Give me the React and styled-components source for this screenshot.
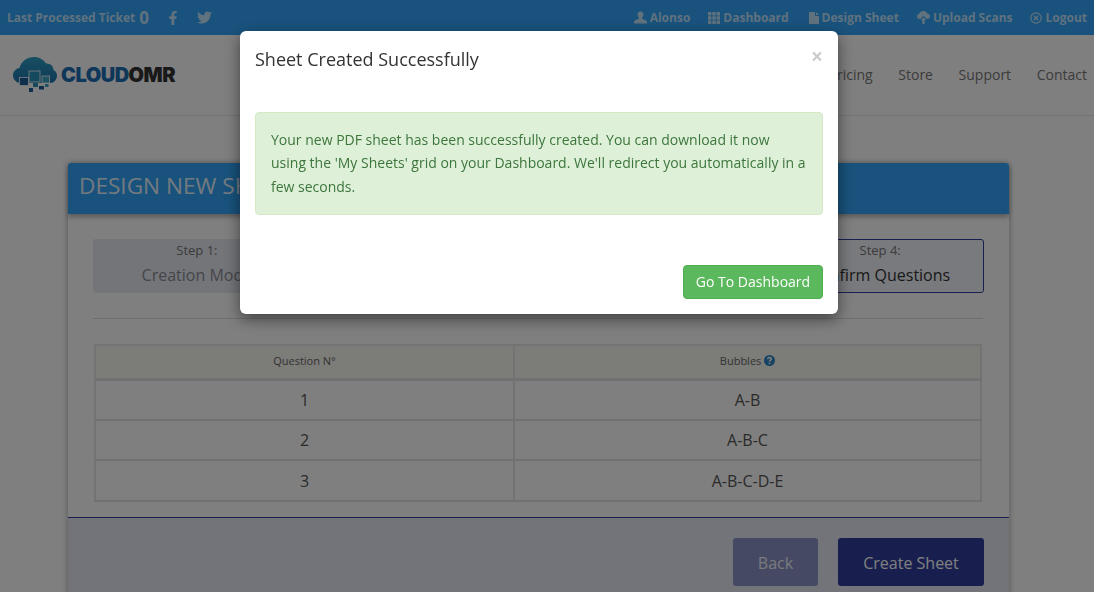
import React from 'react';
import styled, { createGlobalStyle } from 'styled-components';
import { FaFacebookF, FaTwitter } from 'react-icons/fa';

const GlobalStyle = createGlobalStyle`
    html, body {
        margin: 0;
        padding: 0;
        height: 592px;
        overflow: hidden;
        background: #ffffff;
        font-family: "Open Sans", "Liberation Sans", sans-serif;
        font-size: 14px;
        color: #333333;
    }
    * { box-sizing: border-box; }
`;

const UserIcon = () => (
    <svg width="13" height="13" viewBox="0 0 14 13"><path fill="currentColor" d="M7 0c2 0 3.2 1.4 3.2 3.3 0 1.4-.6 2.7-1.500 3.400-.3.3-.2.9.2 1.100l3.600 1.600c.9.4 1.500.9 1.500 1.900V13H0v-1.700c0-1 .6-1.500 1.500-1.900l3.600-1.600c.4-.2.5-.8.2-1.100-.9-.7-1.500-2-1.500-3.400C3.800 1.400 5 0 7 0z"/></svg>
);

const GridIcon = () => (
    <svg width="12" height="12" viewBox="0 0 12 12"><path fill="currentColor" d="M0 0h3.400v3.400H0zM4.300 0h3.400v3.400H4.300zM8.600 0H12v3.400H8.600zM0 4.300h3.400v3.400H0zM4.300 4.300h3.400v3.400H4.300zM8.600 4.300H12v3.400H8.600zM0 8.600h3.400V12H0zM4.300 8.600h3.400V12H4.300zM8.600 8.600H12V12H8.600z"/></svg>
);

const FileIcon = () => (
    <svg width="10" height="12" viewBox="0 0 10 12"><path fill="currentColor" d="M0 0h6v3.600c0 .3.2.5.5.5H10V12H0zM7 0l3 3.100H7z"/></svg>
);

const UploadIcon = () => (
    <svg width="13" height="13" viewBox="0 0 13 13"><path fill="currentColor" d="M6.500 0c1.800 0 3.200 1 3.700 2.600C11.800 2.900 13 4 13 5.500 13 7 11.800 8 10.300 8H9.500L6.500 4.700 3.500 8H2.600C1.100 8 0 6.900 0 5.500 0 4.300.8 3.300 2 3 2.500 1.200 4.300 0 6.500 0zM6.500 6.300 9.200 9.300H7.600V13H5.400V9.300H3.800z"/></svg>
);

const LogoutIcon = () => (
    <svg width="12" height="12" viewBox="0 0 12 12" fill="none" stroke="currentColor"><circle cx="6" cy="6" r="5.200" strokeWidth="1.200"/><path strokeWidth="1.500" d="M4 4l4 4M8 4l-4 4"/></svg>
);

const HelpIcon = () => (
    <svg width="11" height="11" viewBox="0 0 11 11"><circle cx="5.500" cy="5.500" r="5.500" fill="#2f86c5"/><path fill="none" stroke="#fff" strokeWidth="1.500" d="M3.700 4.200c0-1 .8-1.600 1.800-1.600s1.800.6 1.800 1.500c0 1.300-1.800 1.300-1.800 2.500"/><path fill="#fff" d="M4.700 7.600h1.600v1.400H4.700z"/></svg>
);

const CloudLogo = () => (
    <svg width="46" height="38" viewBox="0 0 46 38">
        <defs>
            <linearGradient id="cloudFill" x1="0" y1="0" x2="0" y2="1">
                <stop offset="0" stopColor="#2f9fc4"/>
                <stop offset="1" stopColor="#1f74ad"/>
            </linearGradient>
        </defs>
        <path fill="url(#cloudFill)" d="M9 27C4.500 27 1 23.500 1 19.500 1 15.500 4 12.500 7.500 12 9 5.500 15 1 22 1c5 0 9.500 2.500 12 6.500 4-.5 7.500 2.500 7.500 6.500 2.500 1 3.500 3.500 3.500 5.500 0 4-3 7.500-7 7.500z"/>
        <rect x="7.500" y="21.500" width="9" height="8" fill="#1d5f99" stroke="#ffffff" strokeWidth="0.800"/>
        <rect x="17" y="15" width="11" height="11" fill="#2a93bc" stroke="#ffffff" strokeWidth="0.800"/>
        <rect x="30" y="20" width="7.500" height="7" fill="#3aa5c6" stroke="#ffffff" strokeWidth="0.800"/>
        <rect x="21" y="27" width="5" height="4" fill="#2a93bc"/>
        <rect x="27" y="30" width="5" height="3.500" fill="#1d5f99"/>
        <rect x="33" y="28" width="3.500" height="3" fill="#3aa5c6"/>
        <rect x="17" y="32" width="4" height="4" fill="#1d5f99"/>
    </svg>
);

const App = () => {
    return (
        <>
            <GlobalStyle/>
            <TopBar>
                <TicketGroup>
                    <TicketLabel>Last Processed Ticket</TicketLabel>
                    <TicketCount>0</TicketCount>
                    <SocialLink><FaFacebookF size={14}/></SocialLink>
                    <SocialLink><FaTwitter size={15}/></SocialLink>
                </TicketGroup>
                <TopLinks>
                    <TopLink><UserIcon/>Alonso</TopLink>
                    <TopLink $spaced><GridIcon/>Dashboard</TopLink>
                    <TopLink><FileIcon/>Design Sheet</TopLink>
                    <TopLink><UploadIcon/>Upload Scans</TopLink>
                    <TopLink><LogoutIcon/>Logout</TopLink>
                </TopLinks>
            </TopBar>

            <Header>
                <Logo>
                    <CloudLogo/>
                    <LogoText>CLOUD<LogoDark>OMR</LogoDark></LogoText>
                </Logo>
                <Nav>
                    <NavLink>Pricing</NavLink>
                    <NavLink>Store</NavLink>
                    <NavLink>Support</NavLink>
                    <NavLink>Contact</NavLink>
                </Nav>
            </Header>

            <Card>
                <CardTitle>DESIGN NEW SHEET</CardTitle>
                <CardBody>
                    <Steps>
                        <StepBox>
                            <StepNumber>Step 1:</StepNumber>
                            <StepName>Creation Mode</StepName>
                        </StepBox>
                        <StepBox><StepNumber>Step 2:</StepNumber></StepBox>
                        <StepBox><StepNumber>Step 3:</StepNumber></StepBox>
                        <StepBox $current>
                            <StepNumber>Step 4:</StepNumber>
                            <StepName $current>Confirm Questions</StepName>
                        </StepBox>
                    </Steps>
                    <Rule/>
                    <QuestionTable>
                        <thead>
                            <tr>
                                <HeadCell $first>Question N°</HeadCell>
                                <HeadCell>Bubbles <HelpIcon/></HeadCell>
                            </tr>
                        </thead>
                        <tbody>
                            <tr><Cell>1</Cell><Cell>A-B</Cell></tr>
                            <tr><Cell>2</Cell><Cell>A-B-C</Cell></tr>
                            <tr><Cell>3</Cell><Cell>A-B-C-D-E</Cell></tr>
                        </tbody>
                    </QuestionTable>
                </CardBody>
                <CardFooter>
                    <FooterButton disabled $muted>Back</FooterButton>
                    <FooterButton>Create Sheet</FooterButton>
                </CardFooter>
            </Card>

            <Backdrop/>
            <Modal>
                <ModalHeader>
                    <ModalTitle>Sheet Created Successfully</ModalTitle>
                    <CloseButton>×</CloseButton>
                </ModalHeader>
                <SuccessAlert>
                    Your new PDF sheet has been successfully created. You can download it now using the 'My Sheets' grid on your Dashboard. We'll redirect you automatically in a few seconds.
                </SuccessAlert>
                <ModalFooter>
                    <GreenButton>Go To Dashboard</GreenButton>
                </ModalFooter>
            </Modal>
        </>
    )
}

export default App

const TopBar = styled.div`
    display: flex;
    align-items: center;
    justify-content: space-between;
    height: 35px;
    padding: 0 7px;
    background: #32a6fb;
`;

const TicketGroup = styled.div`
    display: flex;
    align-items: center;
    color: rgba(255, 255, 255, 0.7);
`;

const TicketLabel = styled.span`
    font-size: 12px;
    font-weight: 700;
`;

const TicketCount = styled.span`
    margin-left: 4px;
    font-size: 17px;
    font-weight: 700;
    line-height: 16px;
`;

const SocialLink = styled.span`
    display: flex;
    margin-left: 17px;
`;

const TopLinks = styled.div`
    display: flex;
    align-items: center;
    gap: 18px;
`;

const TopLink = styled.span`
    display: flex;
    align-items: center;
    gap: 3px;
    margin-right: ${(props) => (props.$spaced ? '2px' : '0')};
    font-size: 12px;
    font-weight: 700;
    color: rgba(255, 255, 255, 0.7);
`;

const Header = styled.div`
    display: flex;
    align-items: center;
    justify-content: space-between;
    height: 81px;
    padding: 0 7px 1px 12px;
    border-bottom: 1px solid #e7e7e7;
`;

const Logo = styled.div`
    display: flex;
    align-items: center;
    gap: 3px;
`;

const LogoText = styled.span`
    font-family: Inter, "Liberation Sans", sans-serif;
    font-size: 20px;
    font-weight: 900;
    letter-spacing: -0.500px;
    color: #1f6fb5;
`;

const LogoDark = styled.span`
    color: #333333;
`;

const Nav = styled.nav`
    display: flex;
    gap: 25.600px;
`;

const NavLink = styled.span`
    font-size: 14px;
    color: #777777;
`;

const Card = styled.div`
    width: 941px;
    margin: 47px 0 0 68px;
    border-radius: 3px 3px 0 0;
    box-shadow: 0 0 6px rgba(0, 0, 0, 0.35);
`;

const CardTitle = styled.div`
    height: 51px;
    padding-left: 11px;
    font-size: 22.600px;
    line-height: 46px;
    color: rgba(255, 255, 255, 0.9);
    background: #32a6fb;
    border-radius: 3px 3px 0 0;
    box-shadow: 0 3px 5px rgba(0, 0, 0, 0.3);
`;

const CardBody = styled.div`
    padding: 25px 25px 15px;
`;

const Steps = styled.div`
    display: grid;
    grid-template-columns: repeat(4, 1fr);
    gap: 20px;
`;

const StepBox = styled.div`
    height: 54px;
    text-align: center;
    border-radius: 3px;
    border: 1px solid ${(props) => (props.$current ? '#303f9f' : 'transparent')};
    background: ${(props) => (props.$current ? '#f3f5fb' : '#e8eaf2')};
`;

const StepNumber = styled.div`
    margin-top: 1px;
    font-size: 13px;
    line-height: 18px;
    color: #777777;
`;

const StepName = styled.div`
    margin-top: 4px;
    font-size: 16px;
    line-height: 24px;
    color: ${(props) => (props.$current ? '#333333' : '#8a8c94')};
`;

const Rule = styled.hr`
    height: 1px;
    margin: 25px 1px 25px 0;
    border: 0;
    background: #dddddd;
`;

const QuestionTable = styled.table`
    width: calc(100% - 3px);
    margin-left: 1px;
    table-layout: fixed;
    border-collapse: collapse;
    text-align: center;
    border: 2px solid #e6e6e6;
`;

const HeadCell = styled.th`
    width: ${(props) => (props.$first ? '419px' : 'auto')};
    height: 34px;
    padding: 0 0 2px;
    font-size: 11px;
    font-weight: 400;
    color: #666666;
    background: #f9f9f3;
    border-bottom: 3px solid #e2e2e2;
    border-left: 2px solid #e6e6e6;

    svg {
        vertical-align: -1px;
    }
`;

const Cell = styled.td`
    height: 40.500px;
    padding: 1px 0 0;
    font-size: 16px;
    color: #555555;
    border-bottom: 2px solid #e2e2e2;
    border-left: 2px solid #e6e6e6;
`;

const CardFooter = styled.div`
    display: flex;
    justify-content: flex-end;
    gap: 20px;
    height: 90px;
    padding: 20px 25px;
    border-top: 1px solid #303f9f;
    background: #e6e9f4;
`;

const FooterButton = styled.button`
    width: ${(props) => (props.$muted ? '85px' : '146px')};
    height: 48px;
    padding: 2px 0 0;
    font-family: inherit;
    font-size: 16px;
    color: #ffffff;
    background: #303f9f;
    border: 0;
    border-radius: 3px;
    opacity: ${(props) => (props.$muted ? 0.5 : 1)};
`;

const Backdrop = styled.div`
    position: fixed;
    inset: 0;
    background: rgba(0, 0, 0, 0.5);
`;

const Modal = styled.div`
    position: fixed;
    top: 31px;
    left: 240px;
    width: 598px;
    height: 283px;
    padding: 0 15px;
    background: #ffffff;
    border-radius: 6px;
    box-shadow: 0 5px 15px rgba(0, 0, 0, 0.5);
`;

const ModalHeader = styled.div`
    display: flex;
    align-items: flex-start;
    justify-content: space-between;
    height: 81px;
    padding-top: 15px;
`;

const ModalTitle = styled.h4`
    margin: 0;
    font-size: 18px;
    font-weight: 400;
    line-height: 26px;
    color: #333333;
`;

const CloseButton = styled.span`
    margin: -3px 0 0;
    font-size: 21px;
    font-weight: 700;
    line-height: 26px;
    color: #000000;
    opacity: 0.2;
`;

const SuccessAlert = styled.div`
    padding: 14.700px 15px 16.300px;
    font-size: 14px;
    line-height: 23.400px;
    color: #3c763d;
    background: #dff0d8;
    border: 1px solid #d6e9c6;
    border-radius: 4px;
`;

const ModalFooter = styled.div`
    display: flex;
    justify-content: flex-end;
    margin-top: 50px;
`;

const GreenButton = styled.button`
    width: 140px;
    height: 34px;
    padding: 0 0 2px;
    font-family: inherit;
    font-size: 14px;
    color: #ffffff;
    background: #5cb85c;
    border: 1px solid #4cae4c;
    border-radius: 4px;
`;
